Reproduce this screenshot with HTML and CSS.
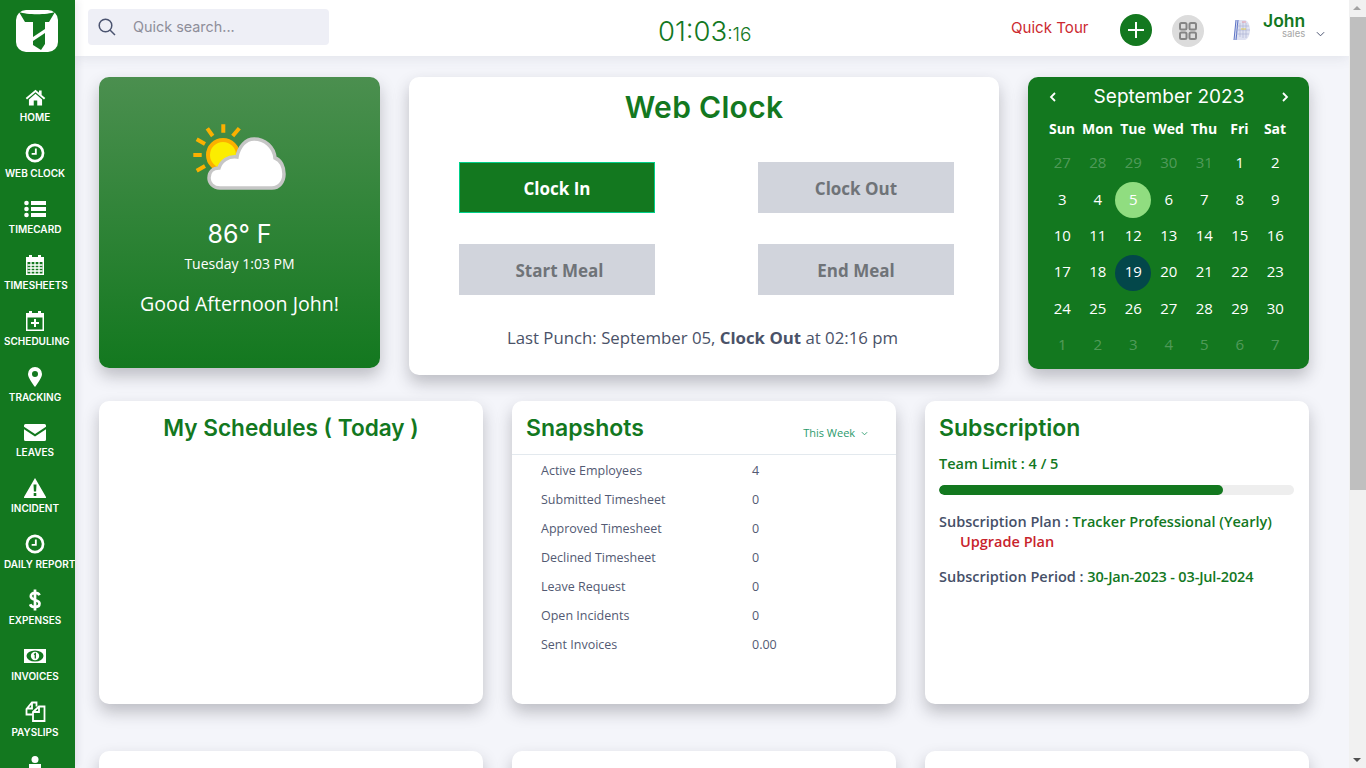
FILE: index.html
```html
<!DOCTYPE html>
<html lang="en">
<head>
<meta charset="utf-8">
<title>Dashboard</title>
<link rel="stylesheet" href="styles.css">
</head>
<body>
<div class="app">
  <aside class="sidebar">
    <div class="logo">
      <svg viewBox="0 0 42 42" width="42" height="42">
        <rect width="42" height="42" rx="10" fill="#fff"/>
        <path d="M3 2C11 5 31 5 39 2L33 12H29V19L17 27V12H9Z" fill="#13781f"/>
        <path d="M17 31L29 23V34L25 40L17 35Z" fill="#13781f"/>
      </svg>
    </div>
    <nav class="nav">
      <a class="nav-item"><span class="nav-icon"><svg viewBox="0 0 24 24" width="21" height="21"><path class="fill" d="M12 3L.8 12.6 2.3 14.300 12 6l9.700 8.300 1.500-1.700L19 9V4h-3v2.500z"/><path class="fill" d="M12 7.800L4.500 14.200V21H10v-5.500h4V21h5.500v-6.800z"/></svg></span><span class="nav-label">HOME</span></a>
      <a class="nav-item"><span class="nav-icon"><svg viewBox="0 0 24 24" width="20" height="20"><circle class="line" cx="12" cy="12" r="9.700" stroke-width="3.200"/><path class="line" d="M13 6.500V13H8" stroke-width="2.200"/></svg></span><span class="nav-label">WEB CLOCK</span></a>
      <a class="nav-item"><span class="nav-icon"><svg viewBox="0 0 22 18" width="22" height="18"><circle class="fill" cx="2.500" cy="3" r="2.300"/><circle class="fill" cx="2.500" cy="9" r="2.300"/><circle class="fill" cx="2.500" cy="15" r="2.300"/><path class="fill" d="M7 1h15v4H7zM7 7h15v4H7zM7 13h15v4H7z"/></svg></span><span class="nav-label">TIMECARD</span></a>
      <a class="nav-item"><span class="nav-icon"><svg viewBox="0 0 20 21" width="20" height="21"><path class="fill" d="M1 3h3V1h3v2h6V1h3v2h3v18H1zM2.500 8v11.500h15V8z"/><path class="line" d="M2.500 11h15M2.500 14h15M2.500 17h15M6 8v12M10 8v12M14 8v12" stroke-width="1.300"/></svg></span><span class="nav-label">TIMESHEETS</span></a>
      <a class="nav-item"><span class="nav-icon"><svg viewBox="0 0 20 21" width="20" height="21"><path class="fill" d="M1 3h3V1h3v2h6V1h3v2h3v18H1zM2.500 7.500v12h15v-12z"/><path class="fill" d="M9 9h2v3h3v2h-3v3H9v-3H6v-2h3z"/></svg></span><span class="nav-label">SCHEDULING</span></a>
      <a class="nav-item"><span class="nav-icon"><svg viewBox="0 0 14 20" width="14" height="20"><path class="fill" fill-rule="evenodd" d="M7 0a7 7 0 0 1 7 7c0 3.500-4 9-7 13C4 16 0 10.500 0 7a7 7 0 0 1 7-7zM7 4a3 3 0 1 0 0 6 3 3 0 0 0 0-6z"/></svg></span><span class="nav-label">TRACKING</span></a>
      <a class="nav-item"><span class="nav-icon"><svg viewBox="0 0 22 17" width="22" height="17"><path class="fill" d="M1.500 0h19A1.500 1.500 0 0 1 22 1.500v1.300L11 10 0 2.800V1.500A1.500 1.500 0 0 1 1.500 0z"/><path class="fill" d="M0 5.200L11 12.400l11-7.200V15.500a1.500 1.500 0 0 1-1.500 1.500h-19A1.500 1.500 0 0 1 0 15.500z"/></svg></span><span class="nav-label">LEAVES</span></a>
      <a class="nav-item"><span class="nav-icon"><svg viewBox="0 0 22 20" width="22" height="20"><path class="fill" fill-rule="evenodd" d="M11 0l11 19a.7.7 0 0 1-.6 1H.6a.7.7 0 0 1-.6-1zM9.500 6.500l.4 7h2.200l.4-7zM9.700 15v3h2.600v-3z"/></svg></span><span class="nav-label">INCIDENT</span></a>
      <a class="nav-item"><span class="nav-icon"><svg viewBox="0 0 24 24" width="20" height="20"><circle class="line" cx="12" cy="12" r="9.700" stroke-width="3.200"/><path class="line" d="M13 6.500V13H8" stroke-width="2.200"/></svg></span><span class="nav-label">DAILY REPORT</span></a>
      <a class="nav-item"><span class="nav-icon"><svg viewBox="0 0 12 22" width="12" height="22"><path class="line" d="M10.500 6.200C9.800 4.500 8 3.900 6 3.900 3.500 3.900 1.800 5.200 1.800 7.300c0 4.700 8.700 2.600 8.700 7.300 0 2.100-1.900 3.500-4.500 3.500-2.300 0-4.100-.9-4.900-2.800M6 .5v21" stroke-width="2.700"/></svg></span><span class="nav-label">EXPENSES</span></a>
      <a class="nav-item"><span class="nav-icon"><svg viewBox="0 0 22 14" width="22" height="14"><rect class="fill" width="22" height="14"/><ellipse cx="11" cy="7" rx="8.500" ry="5.500" fill="#13781f"/><circle class="fill" cx="11" cy="7" r="4.200"/><path d="M10 5.500l1.300-.8V9.500" fill="none" stroke="#13781f" stroke-width="1.300"/></svg></span><span class="nav-label">INVOICES</span></a>
      <a class="nav-item"><span class="nav-icon"><svg viewBox="0 0 21 21" width="21" height="21"><path class="line" d="M7.500 13.500H1.500V8L7 1.500h4.500v4M7 2v5.500H1.800" stroke-width="1.800"/><path class="line" d="M14 5.500h5.500v14.500H8V11zM14 5.500V11H8" stroke-width="1.800"/></svg></span><span class="nav-label">PAYSLIPS</span></a>
      <a class="nav-item"><span class="nav-icon"><svg viewBox="0 0 14 22" width="14" height="22"><circle class="fill" cx="7" cy="3.500" r="3.500"/><path class="fill" d="M1 8h12v9H1z"/></svg></span></a>
    </nav>
  </aside>

  <div class="main">
    <header class="topbar">
      <div class="search">
        <svg class="search-icon" viewBox="0 0 18 18" width="18" height="18"><circle cx="7.500" cy="7.500" r="6.300" fill="none" stroke="#4b5470" stroke-width="1.500"/><path d="M12 12l5 5" stroke="#4b5470" stroke-width="1.500"/></svg>
        <span class="search-text">Quick search...</span>
      </div>
      <div class="clock">01:03<small>:16</small></div>
      <div class="top-right">
        <a class="tour">Quick Tour</a>
        <span class="round round-plus"><svg viewBox="0 0 16 16" width="16" height="16"><path d="M8 0v16M0 8h16" stroke="#fff" stroke-width="2"/></svg></span>
        <span class="round round-grid"><svg viewBox="0 0 18 18" width="18" height="18"><g fill="none" stroke="#858585" stroke-width="2"><rect x="1" y="1" width="6.500" height="6.500" rx="1.500"/><rect x="10.500" y="1" width="6.500" height="6.500" rx="1.500"/><rect x="1" y="10.500" width="6.500" height="6.500" rx="1.500"/><rect x="10.500" y="10.500" width="6.500" height="6.500" rx="1.500"/></g></svg></span>
        <svg class="avatar" viewBox="0 0 18 22" width="18" height="22"><path d="M3 1h9c3 1 5 5 5 10s-2 9-5 10H1z" fill="#dfe2f1"/><path d="M3 1L1 21M5 1L3 21" stroke="#4a63c0" stroke-width=".9"/><path d="M7 4v14M10 3v16M13 4v15M3 7h13M3 11h14M3 15h13" stroke="#a9aed0" stroke-width=".6"/><path d="M8 10h5" stroke="#e3cf4d" stroke-width="1"/><path d="M9 3h4" stroke="#e79aa5" stroke-width="1"/></svg>
        <div class="user">
          <span class="user-name">John</span>
          <span class="user-role">sales</span>
        </div>
        <svg class="user-caret" viewBox="0 0 10 6" width="9" height="6"><path d="M1 1l4 4 4-4" fill="none" stroke="#4b5470" stroke-width="1.100"/></svg>
      </div>
    </header>

    <main class="content">
      <section class="row-top">
        <article class="card weather">
          <svg class="weather-icon" viewBox="0 0 94 68" width="94" height="68">
            <g stroke="#fbb000" stroke-width="4" fill="none">
              <path d="M31.300 1.300v8.400M15.300 5.300l5.400 7.700M47.300 5.300l-6.600 7.700M4.700 16.300l8.300 4.700M1.300 32h8.400M4.700 47.700l8.300-4.700"/>
            </g>
            <circle cx="31" cy="32" r="15" fill="#fbed00" stroke="#fbb000" stroke-width="4"/>
            <path d="M28 65C21 65 17 60 17 55C17 49 21 45 27 45C29 38 36 33 45 34C47 23 54 16 62 16C73 16 82 24 83 35C89 37 92 44 92 51C92 59 87 65 80 65Z" fill="#fff" stroke="#c6c6c6" stroke-width="3.500"/>
          </svg>
          <div class="temp">86° F</div>
          <div class="when">Tuesday 1:03 PM</div>
          <div class="greet">Good Afternoon John!</div>
        </article>

        <article class="card webclock">
          <h1 class="wc-title">Web Clock</h1>
          <div class="wc-grid">
            <button class="wc-btn wc-on">Clock In</button>
            <button class="wc-btn">Clock Out</button>
            <button class="wc-btn wc-start">Start Meal</button>
            <button class="wc-btn">End Meal</button>
          </div>
          <p class="wc-last">Last Punch: September 05, <b>Clock Out</b> at 02:16 pm</p>
        </article>

        <article class="card calendar">
          <div class="cal-head">
            <svg viewBox="0 0 8 10" width="8" height="10"><path d="M6 1L2 5l4 4" fill="none" stroke="#fff" stroke-width="1.800"/></svg>
            <span class="cal-title">September 2023</span>
            <svg viewBox="0 0 8 10" width="8" height="10"><path d="M2 1l4 4-4 4" fill="none" stroke="#fff" stroke-width="1.800"/></svg>
          </div>
          <div class="cal-grid">
            <b>Sun</b><b>Mon</b><b>Tue</b><b>Wed</b><b>Thu</b><b>Fri</b><b>Sat</b>
            <span class="off">27</span><span class="off">28</span><span class="off">29</span><span class="off">30</span><span class="off">31</span><span>1</span><span>2</span>
            <span>3</span><span>4</span><span class="sel">5</span><span>6</span><span>7</span><span>8</span><span>9</span>
            <span>10</span><span>11</span><span>12</span><span>13</span><span>14</span><span>15</span><span>16</span>
            <span>17</span><span>18</span><span class="today">19</span><span>20</span><span>21</span><span>22</span><span>23</span>
            <span>24</span><span>25</span><span>26</span><span>27</span><span>28</span><span>29</span><span>30</span>
            <span class="off">1</span><span class="off">2</span><span class="off">3</span><span class="off">4</span><span class="off">5</span><span class="off">6</span><span class="off">7</span>
          </div>
        </article>
      </section>

      <section class="row-mid">
        <article class="card panel">
          <h2 class="panel-title center">My Schedules ( Today )</h2>
        </article>
        <article class="card panel">
          <div class="snap-head">
            <h2 class="panel-title">Snapshots</h2>
            <span class="snap-range">This Week <svg viewBox="0 0 8 5" width="7" height="5"><path d="M1 1l3 3 3-3" fill="none" stroke="#2a9a6c" stroke-width="1"/></svg></span>
          </div>
          <dl class="snap-list">
            <div class="snap-row"><dt>Active Employees</dt><dd>4</dd></div>
            <div class="snap-row"><dt>Submitted Timesheet</dt><dd>0</dd></div>
            <div class="snap-row"><dt>Approved Timesheet</dt><dd>0</dd></div>
            <div class="snap-row"><dt>Declined Timesheet</dt><dd>0</dd></div>
            <div class="snap-row"><dt>Leave Request</dt><dd>0</dd></div>
            <div class="snap-row"><dt>Open Incidents</dt><dd>0</dd></div>
            <div class="snap-row"><dt>Sent Invoices</dt><dd>0.00</dd></div>
          </dl>
        </article>
        <article class="card panel sub">
          <h2 class="panel-title">Subscription</h2>
          <p class="sub-limit">Team Limit : 4 / 5</p>
          <div class="bar"><div class="bar-fill"></div></div>
          <p class="sub-line sub-plan">Subscription Plan : <span class="green">Tracker Professional (Yearly)</span></p>
          <p class="sub-upgrade">Upgrade Plan</p>
          <p class="sub-line sub-period">Subscription Period : <span class="green">30-Jan-2023 - 03-Jul-2024</span></p>
        </article>
      </section>

      <section class="row-bottom">
        <article class="card stub"></article>
        <article class="card stub"></article>
        <article class="card stub"></article>
      </section>
    </main>
  </div>

  <div class="scrollbar">
    <span class="arrow-up"></span>
    <span class="thumb"></span>
    <span class="arrow-down"></span>
  </div>
</div>
</body>
</html>
```

FILE: styles.css
```css
* { box-sizing: border-box; }
html, body { margin: 0; height: 100%; overflow: hidden; }
body { font-family: "Open Sans", "Liberation Sans", sans-serif; color: #465068; background: #f4f5fa; }

.app { display: flex; width: 1366px; height: 768px; overflow: hidden; }

/* Sidebar */
.sidebar { position: relative; z-index: 3; flex: 0 0 75px; background: #13781f; overflow: hidden; height: 768px; padding-top: 10px; box-shadow: 2px 0 8px rgba(40,40,60,.1); }
.logo { display: flex; justify-content: center; margin: 0 0 0 -1px; height: 42px; }
.nav { margin-top: 34.300px; display: flex; flex-direction: column; }
.nav-item { flex: 0 0 55.850px; width: 62px; margin-left: 4px; display: block; text-align: center; color: #fff; }
.nav-icon { display: flex; align-items: center; justify-content: center; height: 22px; }
.nav-label { display: block; height: 18px; white-space: nowrap; font: 600 10px/18px "Inter", sans-serif; }
.fill { fill: #fff; }
.line { fill: none; stroke: #fff; }

/* Main */
.main { flex: 1; min-width: 0; display: flex; flex-direction: column; height: 768px; overflow: hidden; }
.topbar { position: relative; z-index: 2; flex: 0 0 56px; background: #fff; display: flex; align-items: center; padding-left: 13px; box-shadow: 0 2px 12px rgba(60,64,90,.1); }
.search { width: 241px; height: 36px; margin-top: -2px; background: #eeeff6; border-radius: 4px; display: flex; align-items: center; padding-left: 10px; }
.search-icon { margin-right: 17px; }
.search-text { font: 400 14.400px "Inter", sans-serif; color: #8e8e9a; margin-top: -1px; }
.clock { width: 93px; margin-left: 329px; padding-top: 5px; white-space: nowrap; font: 300 27.500px "Inter", sans-serif; color: #13781f; }
.clock small { font-size: 19px; }
.top-right { flex: 1; display: flex; align-items: center; }
.tour { margin-left: 260px; width: 109px; margin-top: -1px; font: 400 15.100px "Inter", sans-serif; color: #cc2a30; }
.round { width: 32px; height: 32px; border-radius: 50%; display: flex; align-items: center; justify-content: center; }
.round-plus { background: #13781f; margin-top: 4px; }
.round-grid { background: #dcdcdc; margin: 6px 29px 0 20px; }
.avatar { margin-top: 4px; }
.user { margin-left: 12px; width: 53px; display: flex; flex-direction: column; margin-top: -4.500px; }
.user-name { font: 600 17.500px/16px "Inter", sans-serif; color: #13781f; }
.user-role { font: 400 9.500px/8px "Inter", sans-serif; color: #a5a5a5; padding-left: 19px; margin-top: 1px; }
.user-caret { margin-top: 12px; }

.content { flex: 1; overflow: hidden; padding: 21px 40px 0 24px; }
.card { background: #fff; border-radius: 10px; box-shadow: 0 8px 16px rgba(40,40,50,.27); }

.row-top { display: grid; grid-template-columns: 281px 590px 281px; gap: 29px; align-items: start; margin-bottom: 26px; }
.row-mid { display: grid; grid-template-columns: repeat(3, 384px); gap: 29px; margin-bottom: 47px; }
.row-bottom { display: grid; grid-template-columns: repeat(3, 384px); gap: 29px; }
.stub { height: 120px; }

/* Weather */
.weather { height: 291px; color: #fff; text-align: center; background: linear-gradient(#4b8f4f, #13781f); padding-top: 46px; }
.weather-icon { display: block; margin: 0 0 0 93px; }
.temp { margin-top: 28px; font: 400 25px/30px "Inter", sans-serif; }
.when { margin-top: 5px; font-size: 14px; line-height: 20px; }
.greet { margin-top: 16px; font-size: 19.600px; line-height: 27px; }

/* Web clock */
.webclock { height: 298px; text-align: center; }
.wc-title { margin: 0; padding-top: 11px; font: 600 30px/38px "Inter", sans-serif; letter-spacing: .3px; color: #13781f; }
.wc-grid { display: grid; grid-template-columns: 196px 196px; column-gap: 103px; row-gap: 31px; margin: 36px 0 0 50px; }
.wc-btn { height: 51px; border: 0; background: #d1d4dc; color: #6f7378; font: 700 17px "Open Sans", sans-serif; padding: 1px 0 0; }
.wc-on { background: #13781f; color: #fff; border: 1px solid #00d08a; }
.wc-start { padding-left: 5px; }
.wc-last { margin: 31px 0 0; padding-right: 3px; font-size: 16.800px; line-height: 24px; color: #4a5268; }
.wc-last b { font-weight: 700; }

/* Calendar */
.calendar { height: 292px; background: #13781f; color: #fff; padding: 7px 0 0; }
.cal-head { display: flex; align-items: center; justify-content: space-between; height: 24px; padding: 2px 20px 0 21px; }
.cal-title { font: 400 19px "Inter", sans-serif; margin-top: -2px; }
.cal-grid { display: grid; grid-template-columns: repeat(7, 35.500px); grid-template-rows: 27.300px; grid-auto-rows: 36.400px; justify-content: center; margin-top: 9px; }
.cal-grid b { font-size: 14px; font-weight: 700; height: 24px; line-height: 24px; text-align: center; white-space: nowrap; }
.cal-grid span { display: flex; align-items: center; justify-content: center; font-size: 15px; font-weight: 500; margin: 0 auto; width: 36px; height: 36px; border-radius: 50%; }
.cal-grid .off { color: rgba(255,255,255,.27); }
.cal-grid .sel { background: #90dd80; margin-top: 1.500px; padding-bottom: 3px; }
.cal-grid .today { background: #03474a; margin-top: 1.500px; padding-bottom: 3px; }

/* Panels */
.panel { height: 303px; }
.panel-title { margin: 0; font: 600 23px/30px "Inter", sans-serif; color: #13781f; }
.center { text-align: center; padding-top: 12px; font-size: 22.600px; }

.snap-head { height: 54px; border-bottom: 1px solid #e3e9ee; display: flex; justify-content: space-between; padding: 12px 28px 0 14px; }
.snap-range { font-size: 11px; color: #2a9a6c; padding-top: 12px; white-space: nowrap; }
.snap-range svg { margin-left: 3px; vertical-align: 1px; }
.snap-list { margin: 0; padding: 1px 0 0 29px; }
.snap-row { display: flex; height: 29px; align-items: center; font-size: 12.500px; color: #535a73; }
.snap-row dt { width: 211px; }
.snap-row dd { margin: 0; }

.sub { padding: 12px 14px 0; font-size: 14.500px; font-weight: 600; }
.sub p { margin: 0; line-height: 20px; }
.sub .sub-limit { margin-top: 11px; color: #13781f; }
.bar { height: 10px; width: 355px; margin-top: 11px; border-radius: 5px; background: #eee; overflow: hidden; }
.bar-fill { width: 80%; height: 100%; background: #13781f; border-radius: 5px; }
.sub .sub-line { white-space: nowrap; }
.sub .sub-plan { margin-top: 14px; padding-top: 3px; }
.sub .sub-upgrade { color: #c8232c; padding-left: 21px; }
.sub .sub-period { margin-top: 15px; }
.sub-period .green { letter-spacing: -.16px; }
.green { color: #13781f; }

/* Scrollbar */
.scrollbar { position: relative; flex: 0 0 17px; height: 768px; background: #f1f1f1; }
.thumb { position: absolute; left: 1px; right: 0; top: 17px; height: 473px; background: #bfbfbf; }
.arrow-up, .arrow-down { position: absolute; left: 4px; width: 0; height: 0; border-left: 4px solid transparent; border-right: 4px solid transparent; }
.arrow-up { top: 6px; border-bottom: 4px solid #a3a3a3; }
.arrow-down { bottom: 6px; border-top: 4px solid #505050; }
```
